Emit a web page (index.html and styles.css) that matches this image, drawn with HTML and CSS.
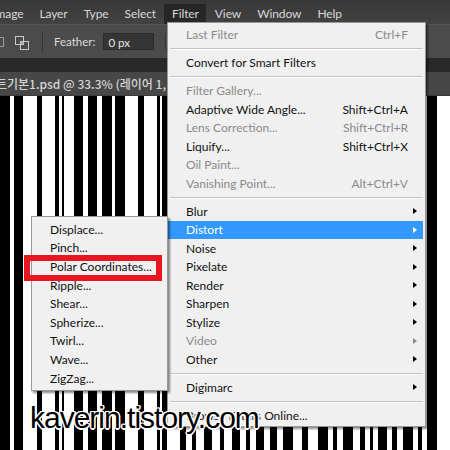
FILE: index.html
```html
<!DOCTYPE html>
<html lang="en">
<head>
  <meta charset="UTF-8">
  <title>Filter menu</title>
  <link rel="stylesheet" href="styles.css">
</head>
<body>
  <div class="app">
    <div class="menubar">
      <span class="top-item">mage</span>
      <span class="top-item">Layer</span>
      <span class="top-item">Type</span>
      <span class="top-item">Select</span>
      <span class="top-item active">Filter</span>
      <span class="top-item">View</span>
      <span class="top-item">Window</span>
      <span class="top-item">Help</span>
    </div>
    <div class="options">
      <span class="cut-icon"></span>
      <svg class="opt-icon" width="14" height="14" viewBox="0 0 14 14">
        <rect x="0.5" y="0.5" width="8" height="8" fill="none" stroke="#c8c8c8"/>
        <rect x="5.5" y="5.5" width="8" height="8" fill="none" stroke="#c8c8c8"/>
        <rect x="6" y="6" width="2" height="2" fill="#9a9a9a"/>
      </svg>
      <span class="opt-sep"></span>
      <span class="opt-label">Feather:</span>
      <span class="opt-input">0 px</span>
      <span class="opt-check"></span>
    </div>
    <div class="strip"></div>
    <div class="tab"><span class="tab-title">트기본1.psd @ 33.3% (레이어 1, ©</span></div>
    <div class="canvas"></div>
  </div>

  <!-- Filter dropdown -->
  <div class="menu filter-menu">
    <div class="item off"><span>Last Filter</span><span class="key">Ctrl+F</span></div>
    <div class="sep"></div>
    <div class="item"><span>Convert for Smart Filters</span></div>
    <div class="sep"></div>
    <div class="item off"><span>Filter Gallery...</span></div>
    <div class="item"><span>Adaptive Wide Angle...</span><span class="key">Shift+Ctrl+A</span></div>
    <div class="item off"><span>Lens Correction...</span><span class="key">Shift+Ctrl+R</span></div>
    <div class="item"><span>Liquify...</span><span class="key">Shift+Ctrl+X</span></div>
    <div class="item off"><span>Oil Paint...</span></div>
    <div class="item off"><span>Vanishing Point...</span><span class="key">Alt+Ctrl+V</span></div>
    <div class="sep"></div>
    <div class="item"><span>Blur</span><span class="arrow"></span></div>
    <div class="item hot"><span>Distort</span><span class="arrow"></span></div>
    <div class="item"><span>Noise</span><span class="arrow"></span></div>
    <div class="item"><span>Pixelate</span><span class="arrow"></span></div>
    <div class="item"><span>Render</span><span class="arrow"></span></div>
    <div class="item"><span>Sharpen</span><span class="arrow"></span></div>
    <div class="item"><span>Stylize</span><span class="arrow"></span></div>
    <div class="item off"><span>Video</span><span class="arrow"></span></div>
    <div class="item"><span>Other</span><span class="arrow"></span></div>
    <div class="sep"></div>
    <div class="item"><span>Digimarc</span><span class="arrow"></span></div>
    <div class="sep"></div>
    <div class="item"><span>Browse Filters Online...</span></div>
  </div>

  <!-- Distort submenu -->
  <div class="menu sub-menu">
    <div class="item"><span>Displace...</span></div>
    <div class="item"><span>Pinch...</span></div>
    <div class="item"><span>Polar Coordinates...</span></div>
    <div class="item"><span>Ripple...</span></div>
    <div class="item"><span>Shear...</span></div>
    <div class="item"><span>Spherize...</span></div>
    <div class="item"><span>Twirl...</span></div>
    <div class="item"><span>Wave...</span></div>
    <div class="item"><span>ZigZag...</span></div>
  </div>

  <div class="mark-box"></div>
  <div class="watermark">kaverin.tistory.com</div>
</body>
</html>
```

FILE: styles.css
```css
* {
  margin: 0;
  padding: 0;
  box-sizing: border-box;
}

body {
  width: 450px;
  height: 450px;
  overflow: hidden;
  position: relative;
  font-family: Lato, "Noto Sans CJK KR", sans-serif;
  background: #000;
}

.app {
  display: flex;
  flex-direction: column;
  height: 450px;
}

/* top menu bar */
.menubar {
  height: 24px;
  display: flex;
  align-items: flex-start;
  gap: 1px;
  margin-left: -12px;
  background: linear-gradient(#383838, #424242);
  color: #d8d8d8;
  font-size: 12px;
  letter-spacing: -0.1px;
}

.top-item {
  padding: 0 7.5px;
  height: 19px;
  margin-top: 4px;
  line-height: 19px;
}

.top-item.active {
  background: #262626;
  height: 20px;
}

/* options bar */
.options {
  height: 34px;
  display: flex;
  align-items: center;
  background: #4b4b4b;
  border-top: 1px solid #555;
  color: #dcdcdc;
  font-size: 11.5px;
}

.cut-icon {
  width: 4px;
  height: 10px;
  border: 1px solid #9a9a9a;
  border-left: 0;
  margin-right: 11px;
}

.opt-icon {
  margin-top: 2px;
}

.opt-sep {
  width: 1px;
  height: 22px;
  background: #333;
  margin: 0 11px 0 13px;
}

.opt-label {
  margin-right: 8px;
}

.opt-input {
  width: 51px;
  height: 17px;
  line-height: 17px;
  padding-left: 4px;
  background: #353535;
  border: 1px solid #2c2c2c;
  color: #e6e6e6;
}

.opt-check {
  width: 12px;
  height: 17px;
  margin-left: 11px;
  border: 1px solid #333;
  border-radius: 2px;
  background: #555;
}

.strip {
  height: 14px;
  background: #282828;
}

.tab {
  height: 24px;
  background: #474747;
  border-bottom: 1px solid #3a3a3a;
  color: #d4d4d4;
  font-size: 12px;
  line-height: 24px;
  white-space: nowrap;
  overflow: hidden;
}

.tab-title {
  display: inline-block;
  margin-left: -4px;
  font-family: "Noto Sans CJK KR", sans-serif;
  font-weight: 500;
}

/* barcode stripes */
.canvas {
  flex: 1;
  background: linear-gradient(to right,
    #000 0 10px, #fff 10px 14px, #000 14px 23px, #fff 23px 37px,
    #000 37px 42px, #fff 42px 55px, #000 55px 59px, #fff 59px 62px,
    #000 62px 64px, #fff 64px 74px, #000 74px 83px, #fff 83px 88px,
    #000 88px 97px, #fff 97px 102px, #000 102px 112px, #fff 112px 115px,
    #000 115px 125px, #fff 125px 138px, #000 138px 144px, #fff 144px 157px,
    #000 157px 160px, #fff 160px 162px, #000 162px 167px, #fff 167px 180px,
    #000 180px 186px, #fff 186px 192px, #000 192px 196px, #fff 196px 204px,
    #000 204px 212px, #fff 212px 220px, #000 220px 224px, #fff 224px 232px,
    #000 232px 240px, #fff 240px 246px, #000 246px 250px, #fff 250px 256px,
    #000 256px 264px, #fff 264px 270px, #000 270px 277px, #fff 277px 283px,
    #000 283px 293px, #fff 293px 302px, #000 302px 308px, #fff 308px 318px,
    #000 318px 328px, #fff 328px 333px, #000 333px 337px, #fff 337px 343px,
    #000 343px 353px, #fff 353px 360px, #000 360px 365px, #fff 365px 370px,
    #000 370px 373px, #fff 373px 378px, #000 378px 387px, #fff 387px 392px,
    #000 392px 397px, #fff 397px 403px, #000 403px 413px, #fff 413px 418px,
    #000 418px 422px, #fff 422px 427px, #000 427px 437px, #fff 437px 450px);
}

/* dropdown menus */
.menu {
  position: absolute;
  background: #f0f0f0;
  border: 1px solid #979797;
  box-shadow: 2px 2px 2px rgba(0, 0, 0, 0.45);
  font-size: 12px;
  color: #111;
}

.filter-menu {
  left: 167px;
  top: 22px;
  width: 259px;
  padding: 2.5px 0 1px;
}

.sub-menu {
  left: 31px;
  top: 216px;
  width: 137px;
  padding: 3px 0;
}

.item {
  height: 18.5px;
  display: flex;
  align-items: center;
  padding: 0 17px 0 18px;
  white-space: nowrap;
}

.sub-menu .item {
  height: 18.6px;
}

.item.off {
  color: #8a8a8a;
}

.item.hot {
  background: #3399ff;
  color: #fff;
  margin-right: 2px;
  padding-right: 15px;
}

.key {
  margin-left: auto;
}

.arrow {
  margin-left: auto;
  margin-right: -9px;
  width: 0;
  height: 0;
  border-left: 4px solid #000;
  border-top: 3.5px solid transparent;
  border-bottom: 3.5px solid transparent;
}

.item.off .arrow {
  border-left-color: #8a8a8a;
}

.item.hot .arrow {
  border-left-color: #fff;
}

.sep {
  height: 9.5px;
  display: flex;
  align-items: center;
  padding: 0 2px;
}

.sep::before {
  content: "";
  flex: 1;
  height: 1px;
  background: #c4c4c4;
  box-shadow: 0 1px 0 #fdfdfd;
}

/* red highlight around Polar Coordinates */
.mark-box {
  position: absolute;
  left: 24px;
  top: 255px;
  width: 138px;
  height: 26px;
  border: 6px solid #e8161e;
}

.watermark {
  position: absolute;
  left: 30px;
  top: 400px;
  font-family: "Liberation Sans", Arial, sans-serif;
  font-size: 30px;
  letter-spacing: -1px;
  line-height: 36px;
  color: #000;
  text-shadow:
    1.5px 0 0 #fff, -1.5px 0 0 #fff, 0 1.5px 0 #fff, 0 -1.5px 0 #fff,
    1px 1px 0 #fff, -1px -1px 0 #fff, 1px -1px 0 #fff, -1px 1px 0 #fff;
}
```
